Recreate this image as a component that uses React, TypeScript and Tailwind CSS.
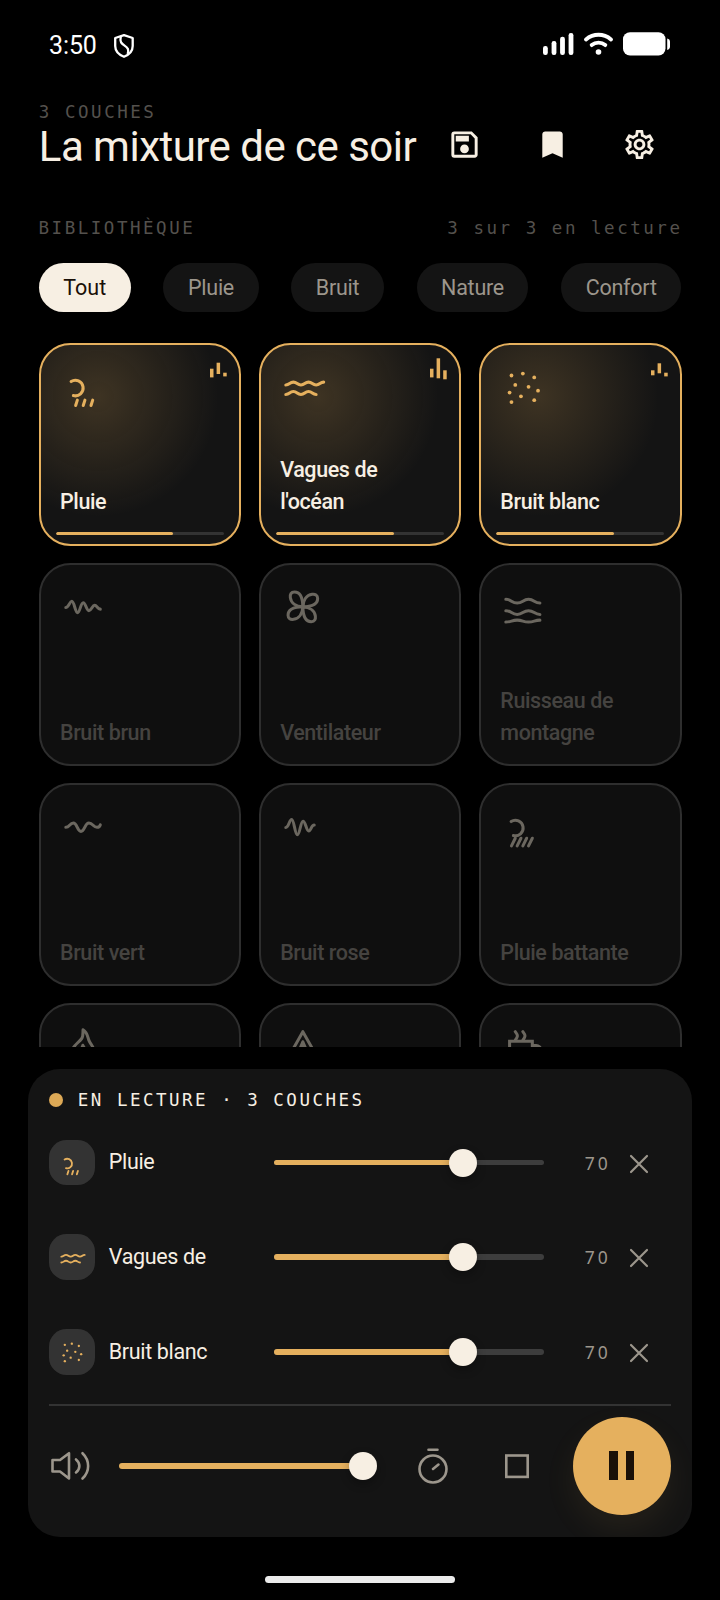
import type { ReactNode } from "react";
import { MdBookmark, MdOutlineSave, MdOutlineSettings } from "react-icons/md";

type IconName =
  | "rain"
  | "waves"
  | "white"
  | "brown"
  | "fan"
  | "stream"
  | "green"
  | "pink"
  | "heavyRain"
  | "fire"
  | "tent"
  | "cup";

const DOTS: [number, number][] = [
  [5, 5], [11, 4], [17, 6], [7, 10], [14, 11],
  [4, 14], [19, 13], [10, 16], [17, 18], [5, 19],
];

const PETAL = "M11 11C10.9 6 9.4 3.2 6.6 3.2C4.7 3.2 4.2 4.5 4.4 6.1C4.8 9.2 7.6 10.8 11 11Z";

const SHAPES: Record<IconName, ReactNode> = {
  rain: (
    <path d="M4.8 8.2A4.1 4.1 0 1 1 6 15.6M8.1 18l-.9 2.8M12.1 18l-.9 2.8M16.2 18l-.9 2.8" />
  ),
  waves: (
    <path d="M2 10c2 0 2-1.5 4-1.5s2 1.5 4 1.5 2-1.5 4-1.5 2 1.5 4 1.5 2-1.5 4-1.5M2 15c2 0 2-1.5 4-1.5s2 1.5 4 1.5 2-1.5 4-1.5 2 1.5 4 1.5" />
  ),
  white: (
    <g fill="currentColor" stroke="none">
      {DOTS.map(([x, y]) => (
        <circle key={`${x}-${y}`} cx={x} cy={y} r="1" />
      ))}
    </g>
  ),
  brown: (
    <path d="M2 11.3C3.5 11.3 4 8.1 5.2 8.1S7 14.1 8.2 14.1 9.9 8.8 11.2 8.8 12.8 13 14.2 13 16 10.2 17.2 10.2 18.7 12.2 20.2 12.2" />
  ),
  fan: (
    <g>
      <path d={PETAL} />
      <path d={PETAL} transform="rotate(90 11 11)" />
      <path d={PETAL} transform="rotate(180 11 11)" />
      <path d={PETAL} transform="rotate(270 11 11)" />
    </g>
  ),
  stream: (
    <path d="M2 7c3 0 3 2 6 2s3-2 6-2 3 2 6 2M2 13c3 0 3 2 6 2s3-2 6-2 3 2 6 2M2 19c3 0 3-1 6-1s3 1 6 1 3-1 6-1" />
  ),
  green: (
    <path d="M2 11.2C4 11.2 4 9 6 9S8 13.4 10 13.4 12 9 14.2 9 16.4 11.2 18.4 11.2C19.4 11.2 20 10.7 20.2 9.9" />
  ),
  pink: (
    <path d="M2 11.3C3.7 11.3 3.8 7.1 5.1 7.1S6.8 15.2 8.1 15.2 9.8 8 11.1 8 12.8 13.2 14.1 13.2 15.4 10 17 10" />
  ),
  heavyRain: (
    <path d="M4.8 8.2A4.1 4.1 0 1 1 6 15.6M7 17l-2 4M10 17l-2 4M13 17l-2 4M16 17l-2 4" />
  ),
  fire: (
    <path d="M11.1 2C13.4 3.4 13.4 5.4 14.2 7.6C15 9.6 17 11 17 14a6 6 0 0 1-12 0C5 11 8.6 9 10.4 6.6C11.2 5.5 11 4 11.1 2ZM11 10.2c1 2 2 3 2 4.6a2 2 0 0 1-4 0c0-1.6 1.5-2.6 2-4.6Z" />
  ),
  tent: <path d="M11 3L2 19h18ZM11 8.4l-4.5 10.6M11 8.4l4.5 10.6M11 9v10" />,
  cup: (
    <path
      strokeLinejoin="miter"
      d="M4 8h12v8a3 3 0 0 1-3 3H7a3 3 0 0 1-3-3ZM16 10.3h2a2.5 2.5 0 0 1 0 5h-2M7 3c1.5 2 1.5 2.5 0 4.5M11 3c1.5 2 1.5 2.5 0 4.5"
    />
  ),
};

function SoundIcon({ name, className }: { name: IconName; className: string }) {
  return (
    <svg
      viewBox="0 0 24 24"
      className={className}
      fill="none"
      stroke="currentColor"
      strokeWidth="1.6"
      strokeLinecap="round"
      strokeLinejoin="round"
    >
      {SHAPES[name]}
    </svg>
  );
}

type Bar = [top: number, height: number];

type Sound = { icon: IconName; name?: string; bars?: Bar[] };

const SOUNDS: Sound[] = [
  { icon: "rain", name: "Pluie", bars: [[11.7, 8.7], [5.7, 11.3], [15.7, 3.7]] },
  { icon: "waves", name: "Vagues de l'océan", bars: [[11.7, 8.7], [1.3, 20], [13.3, 9]] },
  { icon: "white", name: "Bruit blanc", bars: [[13.3, 5], [6.3, 10], [15.7, 3.7]] },
  { icon: "brown", name: "Bruit brun" },
  { icon: "fan", name: "Ventilateur" },
  { icon: "stream", name: "Ruisseau de montagne" },
  { icon: "green", name: "Bruit vert" },
  { icon: "pink", name: "Bruit rose" },
  { icon: "heavyRain", name: "Pluie battante" },
  { icon: "fire" },
  { icon: "tent" },
  { icon: "cup" },
];

function SoundCard({ icon, name, bars }: Sound) {
  const active = bars !== undefined;
  return (
    <div
      className={
        active
          ? "relative flex h-[202.5px] flex-col justify-between rounded-[31.5px] border-2 border-[#e5b05e] bg-[#141414] bg-[radial-gradient(circle_at_29%_26%,rgba(229,176,94,0.2),rgba(229,176,94,0)_120px)] pt-[21px] pb-[25.5px] pl-[19.5px]"
          : "relative flex h-[202.5px] flex-col justify-between rounded-[31.5px] border-2 border-[#2e2e2e] bg-[#0f0f0f] pt-[21px] pb-[14.7px] pl-[19.5px]"
      }
    >
      <SoundIcon
        name={icon}
        className={active ? "ml-[1.5px] size-[45.5px] text-[#e5b05e]" : "ml-[1.5px] size-[45.5px] text-[#6b675f]"}
      />
      {name && (
        <div
          className={
            active
              ? "w-[135px] text-[21.5px] leading-[32px] font-medium tracking-[-0.4px] text-[#f7efe3]"
              : "w-[135px] text-[21.5px] leading-[32px] font-medium tracking-[-0.4px] text-[#454340]"
          }
        >
          {name}
        </div>
      )}
      {bars && (
        <>
          <svg viewBox="0 0 18 24" className="absolute top-[11.5px] right-[11px] h-[24px] w-[18px]" fill="#e5b05e">
            {bars.map(([top, height], i) => (
              <rect key={i} x={i * 6.6} y={top} width="3.5" height={height} />
            ))}
          </svg>
          <div className="absolute right-[15.5px] bottom-[8.5px] left-[15.5px] h-[3.5px] overflow-hidden rounded-full bg-[#333333]">
            <div className="h-full w-[70%] rounded-full bg-[#e5b05e]" />
          </div>
        </>
      )}
    </div>
  );
}

function Slider({ value, className }: { value: number; className: string }) {
  return (
    <div className={`relative flex h-[28px] items-center ${className}`}>
      <div className="h-[5.5px] w-full overflow-hidden rounded-full bg-[#3d3d3d]">
        <div className="h-full bg-[#e5b05e]" style={{ width: `${value}%` }} />
      </div>
      <div
        className="absolute top-0 -ml-[14px] size-[28px] rounded-full bg-[#f7efe3] shadow-[0_4px_10px_rgba(0,0,0,0.3)]"
        style={{ left: `${value}%` }}
      />
    </div>
  );
}

const LAYERS: { icon: IconName; name: string }[] = [
  { icon: "rain", name: "Pluie" },
  { icon: "waves", name: "Vagues de" },
  { icon: "white", name: "Bruit blanc" },
];

const FILTERS = ["Tout", "Pluie", "Bruit", "Nature", "Confort"];

function StatusBar() {
  return (
    <div className="flex h-[100px] shrink-0 items-start justify-between pt-[29px] pr-[50px] pl-[49px] text-white">
      <div className="flex items-center gap-[17.5px]">
        <span className="mt-[2px] text-[25px] leading-[30px] tracking-[-0.1px]">3:50</span>
        <svg viewBox="0 0 20 24" className="mt-px h-[24px] w-[20px]" fill="none" stroke="white" strokeWidth="2.3" strokeLinejoin="round">
          <path d="M10 1.2L18.7 4V12C18.7 17 15.5 20.5 10 22.8C4.5 20.5 1.2 17 1.2 12V4Z" />
          <path d="M6.8 2.5C5.6 8 7.5 9.6 10.6 11.6C14 13.9 15 15.4 13.7 20" />
        </svg>
      </div>
      <svg viewBox="0 0 128 24" className="mt-[3px] h-[24px] w-[128px]" fill="white">
        <rect x="1" y="14" width="4.8" height="9" rx="2.2" />
        <rect x="9.6" y="9" width="4.8" height="14" rx="2.2" />
        <rect x="18.1" y="4.7" width="4.8" height="18.3" rx="2.2" />
        <rect x="26.6" y="1" width="4.8" height="22" rx="2.2" />
        <g fill="none" stroke="white" strokeWidth="3.9" strokeLinecap="round">
          <path d="M44 7.4C51.5 1.2 61.5 1.2 69 7.4" />
          <path d="M49.7 13.1C53.7 9.8 59.3 9.8 63.3 13.1" />
        </g>
        <circle cx="56.5" cy="20" r="2.8" />
        <rect x="81" y="0.3" width="42.5" height="23.3" rx="7" />
        <path d="M125.2 6.5C127 6.8 128 8 128 10V14.5C128 16.5 127 17.6 125.2 17.9Z" />
      </svg>
    </div>
  );
}

export default function App() {
  return (
    <div className="flex h-[1600px] w-[720px] flex-col overflow-hidden bg-black font-['Roboto',sans-serif]">
      <StatusBar />

      <header className="flex h-[116px] shrink-0 items-start justify-between pr-[38.2px] pl-[38.8px]">
        <div className="whitespace-nowrap">
          <div className="font-['DejaVu_Sans_Mono',monospace] text-[17.5px] leading-[24px] tracking-[2.53px] text-[#54514d]">
            3 COUCHES
          </div>
          <h1 className="mt-[1px] text-[42px] leading-[44px] tracking-[-0.52px] text-[#f7efe3]">La mixture de ce soir</h1>
        </div>
        <div className="mt-[2.5px] flex gap-[3.5px] text-[#f7efe3]">
          <button className="flex size-[84px] items-center justify-center"><MdOutlineSave size={35} /></button>
          <button className="flex size-[84px] items-center justify-center"><MdBookmark size={35} /></button>
          <button className="flex size-[84px] items-center justify-center"><MdOutlineSettings size={35} /></button>
        </div>
      </header>

      <div className="flex shrink-0 justify-between pr-[37.5px] pl-[38.5px] font-['DejaVu_Sans_Mono',monospace] text-[17.5px] leading-[24px] tracking-[2.53px] text-[#54514d]">
        <span>BIBLIOTHÈQUE</span>
        <span>3 sur 3 en lecture</span>
      </div>

      <nav className="mt-[23px] flex shrink-0 justify-between px-[38.8px]">
        {FILTERS.map((label, i) => (
          <button
            key={label}
            className={
              i === 0
                ? "h-[49px] rounded-full bg-[#f7efe3] px-[24.5px] pt-px text-[21.5px] text-[#1a1008]"
                : "h-[49px] rounded-full bg-[#141414] px-[24.5px] pt-px text-[21.5px] tracking-[-0.25px] text-[#9c968c]"
            }
          >
            {label}
          </button>
        ))}
      </nav>

      <div className="mt-[31.3px] h-[703.7px] shrink-0 overflow-hidden px-[38.5px]">
        <div className="grid grid-cols-3 gap-[17.5px]">
          {SOUNDS.map((sound) => (
            <SoundCard key={sound.icon} {...sound} />
          ))}
        </div>
      </div>

      <section className="mx-[28px] mt-[21.7px] h-[468px] shrink-0 overflow-hidden rounded-[32px] bg-[#141414] px-[21.3px] pt-[19.3px]">
        <div className="flex h-[27.3px] items-start gap-[14.5px]">
          <span className="mt-[5px] size-[14px] rounded-full bg-[#dda956]" />
          <span className="font-['DejaVu_Sans_Mono',monospace] text-[17.5px] leading-[24px] tracking-[2.5px] text-[#f7efe3]">
            EN LECTURE · 3 COUCHES
          </span>
        </div>

        {LAYERS.map(({ icon, name }) => (
          <div key={icon} className="flex h-[94.6px] items-center">
            <span className="flex size-[45.5px] items-center justify-center rounded-[17.5px] bg-[#333333] pt-[3px] pl-[2px] text-[#e5b05e]">
              <SoundIcon name={icon} className="size-[28px]" />
            </span>
            <span className="ml-[14px] w-[165px] text-[21.5px] tracking-[-0.35px] text-[#f7efe3]">{name}</span>
            <Slider value={70} className="w-[270px]" />
            <span className="ml-[41px] w-[42.5px] font-['Noto_Sans',sans-serif] text-[17.5px] leading-[24px] tracking-[3px] text-[#9c968c]">
              70
            </span>
            <svg viewBox="0 0 24 24" className="mt-[2px] size-[24px]" stroke="#9c968c" strokeWidth="2.2" strokeLinecap="round">
              <path d="M4 4L20 20M20 4L4 20" />
            </svg>
          </div>
        ))}

        <div className="mt-[5px] h-[2px] w-[622px] bg-[#333333]" />

        <div className="flex h-[119.5px] items-center">
          <svg viewBox="0 0 40 40" className="size-[40px] overflow-visible" fill="none" stroke="#9c968c" strokeWidth="2.6" strokeLinecap="round" strokeLinejoin="round">
            <path d="M3.5 14H11L20 7.2V32.5L11 25.5H3.5Z" />
            <path d="M27 13.4C31.5 17 31.5 22.8 27 26.4M33.5 7.2C41 14.5 41 25.5 33.5 32.5" />
          </svg>
          <Slider value={100} className="ml-[30px] w-[243.5px]" />
          <svg viewBox="0 0 40 40" className="ml-[50.5px] size-[40px]" fill="none" stroke="#9c968c" strokeWidth="2.6" strokeLinecap="round">
            <circle cx="20" cy="23" r="13.5" />
            <path d="M15.5 3.8H24.5M20 23L25.5 18.5" />
          </svg>
          <svg viewBox="0 0 26 26" className="ml-[51px] size-[26px]" fill="none" stroke="#9c968c" strokeWidth="2.6">
            <rect x="2.3" y="2.5" width="21.4" height="21.4" />
          </svg>
          <button className="ml-[42.7px] flex size-[98px] items-center justify-center gap-[8px] rounded-full bg-[#e5b05e] shadow-[0_14px_32px_rgba(229,176,94,0.08)]">
            <span className="h-[29px] w-[8.5px] bg-[#1a1008]" />
            <span className="h-[29px] w-[8.5px] bg-[#1a1008]" />
          </button>
        </div>
      </section>

      <div className="mt-[39.3px] h-[7px] w-[190px] shrink-0 self-center rounded-full bg-[#ebebeb]" />
    </div>
  );
}
